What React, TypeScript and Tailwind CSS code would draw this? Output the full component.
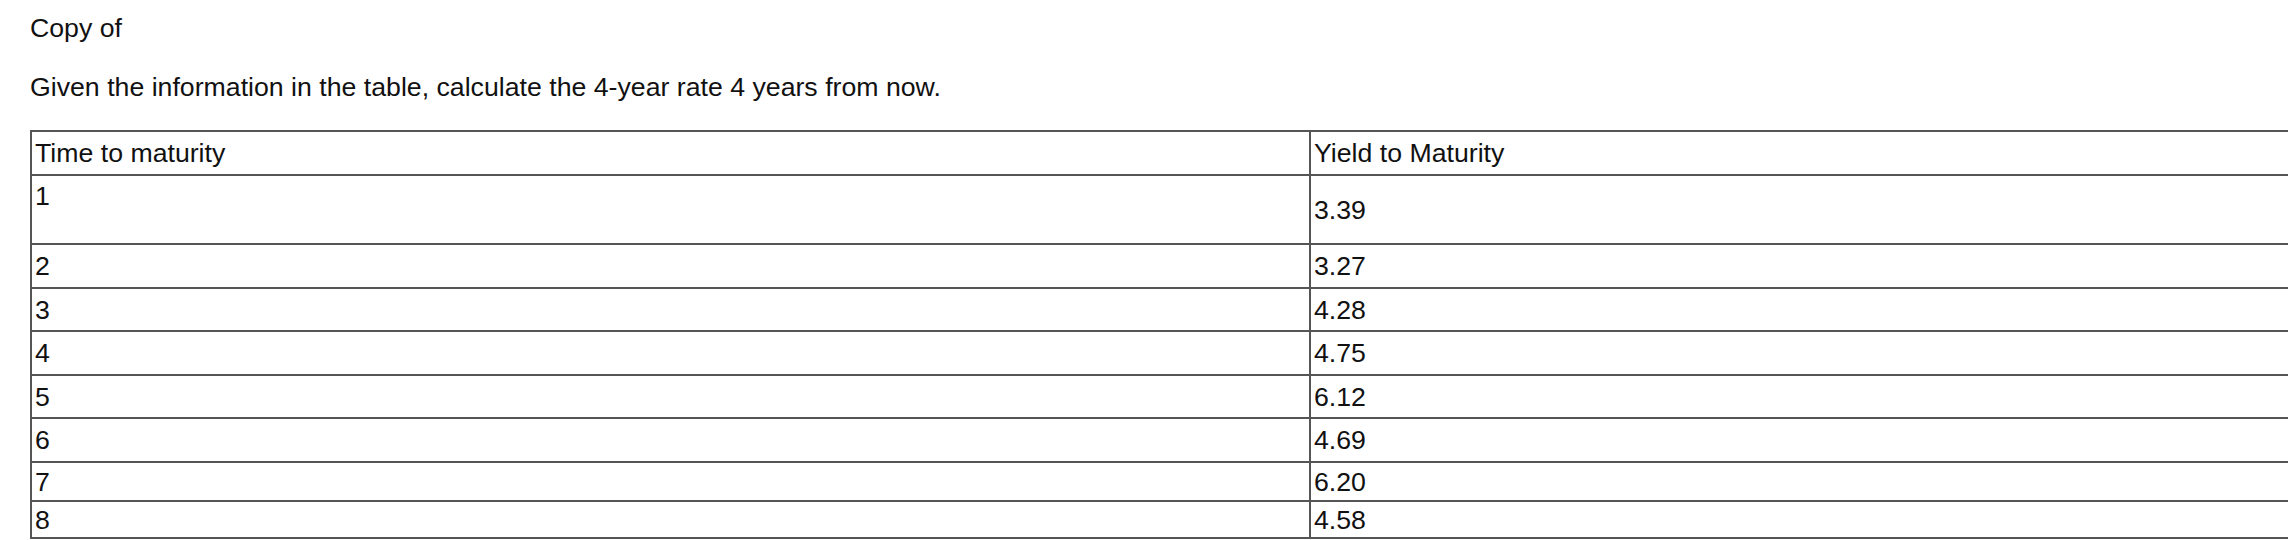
import React from "react";

const rows: { t: string; y: string; h: string; twoLine?: boolean }[] = [
  { t: "1", y: "3.39", h: "h-[69px]", twoLine: true },
  { t: "2", y: "3.27", h: "h-[44px]" },
  { t: "3", y: "4.28", h: "h-[43px]" },
  { t: "4", y: "4.75", h: "h-[44px]" },
  { t: "5", y: "6.12", h: "h-[43px]" },
  { t: "6", y: "4.69", h: "h-[44px]" },
  { t: "7", y: "6.20", h: "h-[39px]" },
  { t: "8", y: "4.58", h: "h-[37px]" },
];

export default function App() {
  return (
    <div className="w-[2288px] h-[540px] overflow-hidden bg-white text-[#111] font-['Liberation_Sans',Arial,sans-serif] text-[26.7px] leading-[28px]">
      <div className="pl-[30px] pt-[14px]">
        <p>Copy of</p>
        <p className="mt-[31px]">
          Given the information in the table, calculate the 4-year rate 4 years from now.
        </p>
        <div className="mt-[29px] w-[2560px] border-l-2 border-t-2 border-[#555]">
          <div className="grid grid-cols-[1279px_1279px] h-[44px] border-b-2 border-[#555]">
            <div className="border-r-2 border-[#555] pl-[3px] flex items-center">Time to maturity</div>
            <div className="border-r-2 border-[#555] pl-[3px] flex items-center">Yield to Maturity</div>
          </div>
          {rows.map((r) => (
            <div key={r.t} className={`grid grid-cols-[1279px_1279px] border-b-2 border-[#555] ${r.h}`}>
              <div className="border-r-2 border-[#555] pl-[3px] flex flex-col justify-center">
                <span>{r.t}</span>
                {r.twoLine ? <span>&nbsp;</span> : null}
              </div>
              <div className="border-r-2 border-[#555] pl-[3px] flex items-center">{r.y}</div>
            </div>
          ))}
        </div>
      </div>
    </div>
  );
}
